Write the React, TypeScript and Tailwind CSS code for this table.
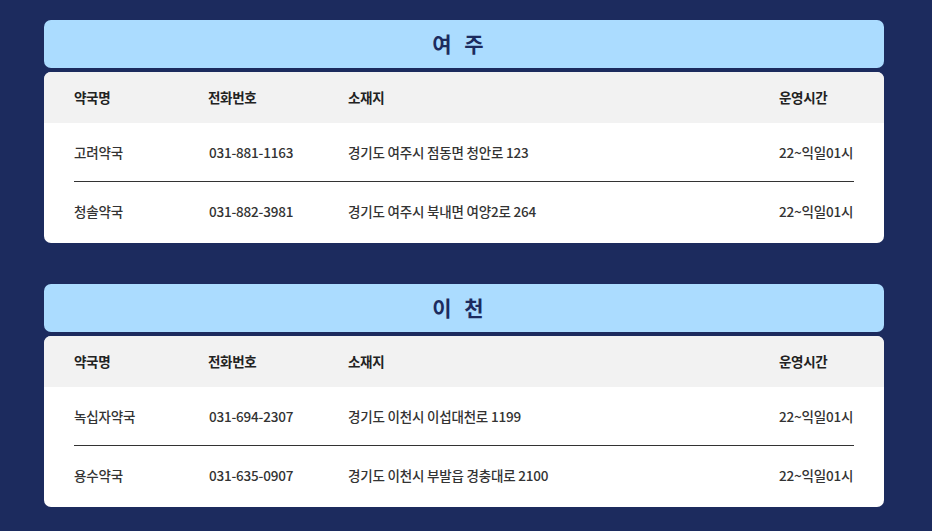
const sections = [
	{
		title: '여 주',
		rows: [
			{ name: '고려약국', tel: '031-881-1163', addr: '경기도 여주시 점동면 청안로 123', hours: '22~익일01시' },
			{ name: '청솔약국', tel: '031-882-3981', addr: '경기도 여주시 북내면 여양2로 264', hours: '22~익일01시' },
		],
	},
	{
		title: '이 천',
		rows: [
			{ name: '녹십자약국', tel: '031-694-2307', addr: '경기도 이천시 이섭대천로 1199', hours: '22~익일01시' },
			{ name: '용수약국', tel: '031-635-0907', addr: '경기도 이천시 부발읍 경충대로 2100', hours: '22~익일01시' },
		],
	},
]

const cols = 'grid grid-cols-[134px_140px_1fr_75px] items-center'

export default function App() {
	return (
		<div
			className="min-h-[531px] w-full bg-[#1c2b5e] pt-[20px] pb-6"
			style={{ fontFamily: '"Noto Sans CJK KR", "Noto Sans", sans-serif' }}
		>
			<div className="ml-[44px] flex w-[840px] flex-col gap-[41px]">
				{sections.map((s) => (
					<section key={s.title} className="flex flex-col gap-[4px]">
						<div className="flex h-[48px] items-center justify-center rounded-[7px] bg-[#abdcff]">
							<h2 className="pr-[8px] text-[21px] font-bold tracking-[4px] text-[#1c2b5e]">{s.title}</h2>
						</div>
						<div className="overflow-hidden rounded-[7px] bg-white pb-[2px]">
							<div className={`${cols} h-[51px] bg-[#f2f2f2] px-[30px] text-[13.5px] font-bold tracking-[-0.3px] text-[#222]`}>
								<div>약국명</div>
								<div>전화번호</div>
								<div>소재지</div>
								<div>운영시간</div>
							</div>
							<div className="px-[30px]">
								{s.rows.map((r, i) => (
									<div
										key={r.name}
										className={`${cols} h-[59px] text-[13.5px] font-medium tracking-[-0.2px] text-[#333] ${i < s.rows.length - 1 ? 'border-b border-[#333]' : ''}`}
									>
										<div>{r.name}</div>
										<div className="pl-[1px]">{r.tel}</div>
										<div>{r.addr}</div>
										<div className="whitespace-nowrap">{r.hours}</div>
									</div>
								))}
							</div>
						</div>
					</section>
				))}
			</div>
		</div>
	)
}
